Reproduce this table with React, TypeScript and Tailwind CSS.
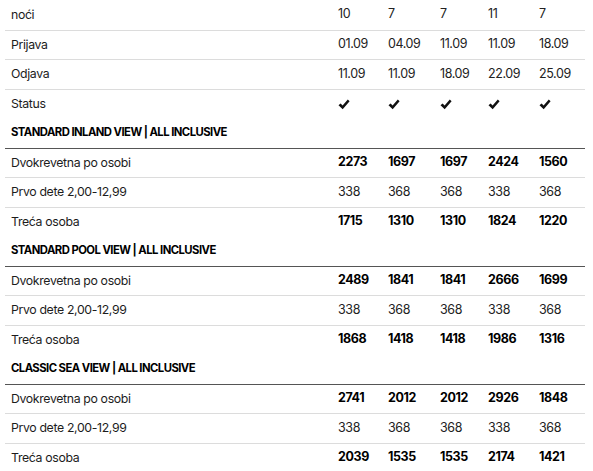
import React from 'react';

type Row = { label: string; values: string[]; bold?: boolean; check?: boolean };

const top: Row[] = [
  { label: 'noći', values: ['10', '7', '7', '11', '7'] },
  { label: 'Prijava', values: ['01.09', '04.09', '11.09', '11.09', '18.09'] },
  { label: 'Odjava', values: ['11.09', '11.09', '18.09', '22.09', '25.09'] },
  { label: 'Status', values: ['', '', '', '', ''], check: true },
];

const groups = [
  {
    title: 'STANDARD INLAND VIEW | ALL INCLUSIVE',
    rows: [
      { label: 'Dvokrevetna po osobi', values: ['2273', '1697', '1697', '2424', '1560'], bold: true },
      { label: 'Prvo dete 2,00-12,99', values: ['338', '368', '368', '338', '368'] },
      { label: 'Treća osoba', values: ['1715', '1310', '1310', '1824', '1220'], bold: true },
    ],
  },
  {
    title: 'STANDARD POOL VIEW | ALL INCLUSIVE',
    rows: [
      { label: 'Dvokrevetna po osobi', values: ['2489', '1841', '1841', '2666', '1699'], bold: true },
      { label: 'Prvo dete 2,00-12,99', values: ['338', '368', '368', '338', '368'] },
      { label: 'Treća osoba', values: ['1868', '1418', '1418', '1986', '1316'], bold: true },
    ],
  },
  {
    title: 'CLASSIC SEA VIEW | ALL INCLUSIVE',
    rows: [
      { label: 'Dvokrevetna po osobi', values: ['2741', '2012', '2012', '2926', '1848'], bold: true },
      { label: 'Prvo dete 2,00-12,99', values: ['338', '368', '368', '338', '368'] },
      { label: 'Treća osoba', values: ['2039', '1535', '1535', '2174', '1421'], bold: true },
    ],
  },
];

const cols = 'grid grid-cols-[328px_50px_52px_48px_51px_51px]';

function Check() {
  return (
    <svg width="12" height="11" viewBox="0 0 12 11" className="mt-[1px]">
      <path d="M0.5 6.2 L2.6 4.4 L4.6 6.6 L9.8 0.6 L11.6 2.2 L4.7 10.2 Z" fill="#111" />
    </svg>
  );
}

function DataRow({ row, border }: { row: Row; border: string }) {
  return (
    <div className={`${cols} h-[29.5px] items-center ${border}`}>
      <div className="pl-[6px] text-[12.3px] tracking-[-0.35px] text-[#1c1c1c]">{row.label}</div>
      {row.values.map((v, i) => (
        <div
          key={i}
          className={`pl-[5px] text-[12.5px] tracking-[-0.4px] ${row.bold ? 'font-bold text-black' : 'text-[#222]'}`}
        >
          {row.check ? <Check /> : v}
        </div>
      ))}
    </div>
  );
}

export default function App() {
  return (
    <div className="w-[593px] h-[471px] overflow-hidden bg-white font-['Inter',sans-serif]">
      <div className="ml-[5px] w-[580px]">
        {top.map((r, i) => (
          <DataRow key={r.label} row={r} border={i === 0 ? '' : 'border-t border-[#dcdcdc]'} />
        ))}
        {groups.map((g) => (
          <div key={g.title}>
            <div className="h-[29.5px] flex items-center pl-[6px] text-[11.3px] font-bold text-black tracking-[-0.55px]">
              {g.title}
            </div>
            {g.rows.map((r, i) => (
              <DataRow
                key={r.label}
                row={r}
                border={i === 0 ? 'border-t-[1.5px] border-[#555]' : 'border-t border-[#dcdcdc]'}
              />
            ))}
          </div>
        ))}
      </div>
    </div>
  );
}
